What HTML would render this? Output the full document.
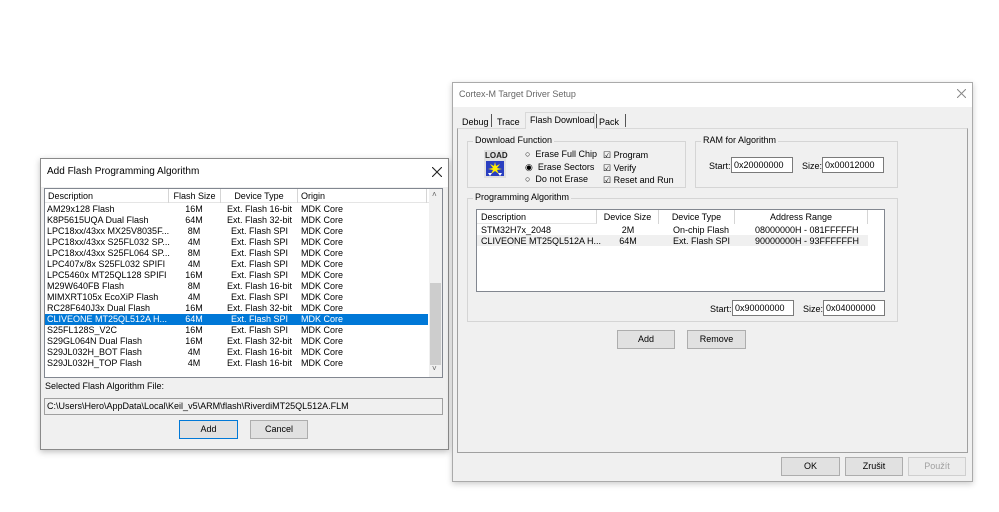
<!DOCTYPE html><html><head><style>
body{margin:0;width:999px;height:512px;background:#fff;position:relative;font-family:"Liberation Sans",sans-serif;font-size:9px;color:#000;overflow:hidden}
.a{position:absolute;white-space:nowrap}
.btn{position:absolute;background:#e1e1e1;border:1px solid #adadad;text-align:center;box-sizing:border-box;font-size:9px}
.fld{position:absolute;background:#fff;border:1px solid #7a7a7a;box-sizing:border-box;padding-left:2px;font-size:9px;line-height:15px}
.grp{position:absolute;border:1px solid #d5d5d5;box-sizing:border-box}
.lg{position:absolute;top:-7px;left:5px;background:#f0f0f0;padding:0 2px}
.hd{position:absolute;top:0;height:14px;border-right:1px solid #d5d5d5;line-height:14px;box-sizing:border-box}
</style></head><body>
<!-- left dialog -->
<div class="a" style="left:40px;top:158px;width:409px;height:292px;background:#f0f0f0;border:1px solid #8a8a8a;box-sizing:border-box;box-shadow:0 2px 6px rgba(0,0,0,.25)"></div>
<div class="a" style="left:41px;top:159px;width:407px;height:28px;background:#fff"></div>
<div class="a" style="left:47px;top:166px;font-size:10px">Add Flash Programming Algorithm</div>
<svg class="a" style="left:432px;top:167px" width="10" height="10"><path d="M0 0L10 10M10 0L0 10" stroke="#222" stroke-width="1.1"/></svg>
<div class="a" style="left:44px;top:188px;width:399px;height:190px;background:#fff;border:1px solid #828790;box-sizing:border-box"></div>
<div class="a" style="left:45px;top:189px;width:384px;height:14px;border-bottom:1px solid #e5e5e5;box-sizing:border-box">
<div class="hd" style="left:0;width:124px;padding-left:3px">Description</div>
<div class="hd" style="left:124px;width:52px;text-align:center">Flash Size</div>
<div class="hd" style="left:176px;width:77px;text-align:center">Device Type</div>
<div class="hd" style="left:253px;width:129px;padding-left:3px">Origin</div>
</div>
<div class="a" style="left:429px;top:189px;width:13px;height:188px;background:#f0f0f0"></div>
<div class="a" style="left:430px;top:283px;width:11px;height:82px;background:#cdcdcd"></div>
<div class="a" style="left:432px;top:190px;font-size:8px;color:#606060">˄</div>
<div class="a" style="left:432px;top:364px;font-size:8px;color:#606060">˅</div>
<div class="a" style="left:45px;top:314px;width:383px;height:11px;background:#0078d7"></div>
<div class="a" style="left:47px;top:204px;line-height:11px">AM29x128 Flash<br>K8P5615UQA Dual Flash<br>LPC18xx/43xx MX25V8035F...<br>LPC18xx/43xx S25FL032 SP...<br>LPC18xx/43xx S25FL064 SP...<br>LPC407x/8x S25FL032 SPIFI<br>LPC5460x MT25QL128 SPIFI<br>M29W640FB Flash<br>MIMXRT105x EcoXiP Flash<br>RC28F640J3x Dual Flash<br><span style="color:#fff">CLIVEONE MT25QL512A H...</span><br>S25FL128S_V2C<br>S29GL064N Dual Flash<br>S29JL032H_BOT Flash<br>S29JL032H_TOP Flash</div>
<div class="a" style="left:170px;width:48px;text-align:center;top:204px;line-height:11px">16M<br>64M<br>8M<br>4M<br>8M<br>4M<br>16M<br>8M<br>4M<br>16M<br><span style="color:#fff">64M</span><br>16M<br>16M<br>4M<br>4M</div>
<div class="a" style="left:221px;width:77px;text-align:center;top:204px;line-height:11px">Ext. Flash 16-bit<br>Ext. Flash 32-bit<br>Ext. Flash SPI<br>Ext. Flash SPI<br>Ext. Flash SPI<br>Ext. Flash SPI<br>Ext. Flash SPI<br>Ext. Flash 16-bit<br>Ext. Flash SPI<br>Ext. Flash 32-bit<br><span style="color:#fff">Ext. Flash SPI</span><br>Ext. Flash SPI<br>Ext. Flash 32-bit<br>Ext. Flash 16-bit<br>Ext. Flash 16-bit</div>
<div class="a" style="left:301px;top:204px;line-height:11px">MDK Core<br>MDK Core<br>MDK Core<br>MDK Core<br>MDK Core<br>MDK Core<br>MDK Core<br>MDK Core<br>MDK Core<br>MDK Core<br><span style="color:#fff">MDK Core</span><br>MDK Core<br>MDK Core<br>MDK Core<br>MDK Core</div>
<div class="a" style="left:45px;top:381px">Selected Flash Algorithm File:</div>
<div class="a" style="left:44px;top:398px;width:399px;height:17px;border:1px solid #a0a0a0;box-sizing:border-box;padding-left:2px;line-height:15px;background:#f0f0f0">C:\Users\Hero\AppData\Local\Keil_v5\ARM\flash\RiverdiMT25QL512A.FLM</div>
<div class="btn" style="left:179px;top:420px;width:59px;height:19px;line-height:17px;border-color:#0078d7">Add</div>
<div class="btn" style="left:250px;top:420px;width:58px;height:19px;line-height:17px">Cancel</div>
<!-- right dialog -->
<div class="a" style="left:452px;top:82px;width:521px;height:400px;background:#f0f0f0;border:1px solid #aaa;box-sizing:border-box;box-shadow:0 2px 6px rgba(0,0,0,.2)"></div>
<div class="a" style="left:453px;top:83px;width:519px;height:24px;background:#fff"></div>
<div class="a" style="left:459px;top:89px;color:#666">Cortex-M Target Driver Setup</div>
<svg class="a" style="left:957px;top:89px" width="9" height="9"><path d="M0 0L9 9M9 0L0 9" stroke="#888" stroke-width="1"/></svg>
<div class="a" style="left:457px;top:128px;width:511px;height:325px;border:1px solid #a0a0a0;border-top-color:#d9d9d9;box-sizing:border-box"></div>
<div class="a" style="left:462px;top:117px">Debug</div>
<div class="a" style="left:491px;top:114px;width:1px;height:13px;background:#555"></div>
<div class="a" style="left:497px;top:117px">Trace</div>
<div class="a" style="left:525px;top:112px;width:70px;height:17px;border:1px solid #d9d9d9;border-bottom:none;background:#f0f0f0;box-sizing:border-box"></div>
<div class="a" style="left:530px;top:115px">Flash Download</div>
<div class="a" style="left:596px;top:114px;width:1px;height:14px;background:#555"></div>
<div class="a" style="left:599px;top:117px">Pack</div>
<div class="a" style="left:625px;top:114px;width:1px;height:13px;background:#555"></div>
<div class="grp" style="left:467px;top:141px;width:219px;height:47px"><span class="lg">Download Function</span></div>
<div class="a" style="left:484px;top:150px;width:22px;height:28px;background:#e0e0e0">
<div class="a" style="left:1px;top:1px;font-size:8px;font-weight:bold;color:#222">LOAD</div>
<div class="a" style="left:2px;top:11px;width:18px;height:15px;background:#2a3fc0"></div>
<svg class="a" style="left:2px;top:11px" width="18" height="15"><path d="M9 1L10 5L14 3L11 7L16 8L11 9L13 13L9 10L5 13L7 9L2 8L7 7L4 3L8 5Z" fill="#ffee00"/><path d="M2 12h4l-2 3zM12 12h4l-2 3z" fill="#fff"/></svg></div>
<div class="a" style="left:525px;top:148px;line-height:12.5px">○ &nbsp;Erase Full Chip<br>◉ &nbsp;Erase Sectors<br>○ &nbsp;Do not Erase</div>
<div class="a" style="left:603px;top:149px;line-height:12.5px">☑ Program<br>☑ Verify<br>☑ Reset and Run</div>
<div class="grp" style="left:695px;top:141px;width:203px;height:47px"><span class="lg">RAM for Algorithm</span></div>
<div class="a" style="left:709px;top:161px">Start:</div>
<div class="fld" style="left:731px;top:157px;width:62px;height:16px">0x20000000</div>
<div class="a" style="left:802px;top:161px">Size:</div>
<div class="fld" style="left:822px;top:157px;width:62px;height:16px">0x00012000</div>
<div class="grp" style="left:467px;top:198px;width:431px;height:124px"><span class="lg">Programming Algorithm</span></div>
<div class="a" style="left:476px;top:209px;width:409px;height:83px;background:#fff;border:1px solid #828790;box-sizing:border-box">
<div class="hd" style="left:0;width:120px;padding-left:4px;border-bottom:1px solid #e5e5e5">Description</div>
<div class="hd" style="left:120px;width:62px;text-align:center">Device Size</div>
<div class="hd" style="left:182px;width:76px;text-align:center">Device Type</div>
<div class="hd" style="left:258px;width:133px;text-align:center">Address Range</div>
<div class="a" style="left:0;top:25px;width:391px;height:11px;background:#f0f0f0"></div>
<div class="a" style="left:4px;top:15px;line-height:11px">STM32H7x_2048<br>CLIVEONE MT25QL512A H...</div>
<div class="a" style="left:120px;width:62px;text-align:center;top:15px;line-height:11px">2M<br>64M</div>
<div class="a" style="left:196px;top:15px;line-height:11px">On-chip Flash<br>Ext. Flash SPI</div>
<div class="a" style="left:278px;top:15px;line-height:11px">08000000H - 081FFFFFH<br>90000000H - 93FFFFFFH</div>
</div>
<div class="a" style="left:710px;top:304px">Start:</div>
<div class="fld" style="left:732px;top:300px;width:62px;height:16px">0x90000000</div>
<div class="a" style="left:803px;top:304px">Size:</div>
<div class="fld" style="left:823px;top:300px;width:62px;height:16px">0x04000000</div>
<div class="btn" style="left:617px;top:330px;width:58px;height:19px;line-height:17px">Add</div>
<div class="btn" style="left:687px;top:330px;width:59px;height:19px;line-height:17px">Remove</div>
<div class="btn" style="left:781px;top:457px;width:59px;height:19px;line-height:17px">OK</div>
<div class="btn" style="left:845px;top:457px;width:58px;height:19px;line-height:17px">Zrušit</div>
<div class="btn" style="left:908px;top:457px;width:58px;height:19px;line-height:17px;color:#a0a0a0;background:#ececec;border-color:#cfcfcf">Použít</div>
</body></html>
